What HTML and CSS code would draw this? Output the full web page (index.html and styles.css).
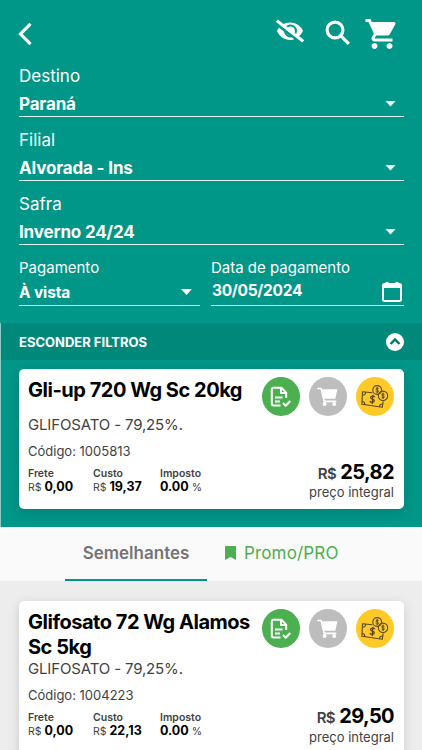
FILE: index.html
```html
<!DOCTYPE html>
<html lang="pt-BR">
<head>
<meta charset="utf-8">
<title>Produtos</title>
<link rel="stylesheet" href="styles.css">
</head>
<body>
<svg class="defs" width="0" height="0">
  <symbol id="cart" viewBox="0 0 24 24"><path d="M7 18c-1.100 0-1.990.9-1.990 2S5.900 22 7 22s2-.9 2-2-.9-2-2-2zM1 2v2h2l3.600 7.590-1.350 2.450C4.520 15.370 5.480 17 7 17h12v-2H7.420c-.14 0-.25-.11-.25-.25l.03-.12.900-1.630h7.450c.75 0 1.410-.41 1.750-1.030l3.580-6.490A1 1 0 0 0 20 4H5.210l-.94-2H1zm16 16c-1.100 0-1.990.9-1.990 2s.89 2 1.990 2 2-.9 2-2-.9-2-2-2z"/></symbol>
  <symbol id="cart-small" viewBox="0 0 22 20"><path d="M1 1.500h3.200l3 12.800h11.500" fill="none" stroke="currentColor" stroke-width="1.700" stroke-linecap="round" stroke-linejoin="round"/><path d="M5 2.200h15.400l-2.100 9.600H7.100z"/><circle cx="7.600" cy="17" r="2"/><circle cx="17.200" cy="17" r="2"/></symbol>
  <symbol id="doc" viewBox="0 0 22 22"><g fill="none" stroke="currentColor" stroke-width="2" stroke-linejoin="round"><path d="M10.500 19.500H3.200a1.400 1.400 0 0 1-1.400-1.400V3.200a1.400 1.400 0 0 1 1.400-1.400h8.200l4.800 4.800V12"/><path d="M11 2v5h5M5 11.500h7.500M5 15.500h5"/><path d="m13 17 2.700 2.700 4.500-4.700" stroke-width="2.200"/></g></symbol>
  <symbol id="money" viewBox="0 0 28 24"><g fill="none" stroke="currentColor" stroke-width="1.100" stroke-linejoin="round"><path d="M11.500 7.700 1.500 6.800.9 19.300l20.400 3 .9-6"/><path d="M1.500 10.200c2 .1 3.200-1.200 3.200-3.100M1 16.200c2 .3 2.900 1.900 2.800 3.500M18.500 21.800c.1-1.800 1.400-2.900 3.200-2.800"/><circle cx="16.200" cy="5" r="4.400"/><circle cx="22" cy="10.800" r="4.700"/><path d="M13.800 12.100c-.7-1.400-4-1.500-4.200.4-.2 2 3.900 1.300 3.700 3.500-.2 1.900-3.600 1.800-4.400.1M11.900 9.700l-.7 9.400" stroke-width="1.300"/><path d="M17.700 3.800c-.5-1-2.700-1-2.800.2-.1 1.300 2.700.8 2.600 2.200-.1 1.200-2.300 1.100-2.800.1M16.200 1.900v6.200M23.500 9.600c-.5-1-2.700-1-2.800.2-.1 1.300 2.700.8 2.600 2.200-.1 1.200-2.300 1.100-2.800.1M22 7.700v6.200" stroke-width="1"/></g></symbol>
</svg>
<main class="screen">
  <section class="top">
    <header class="toolbar">
      <svg class="back" viewBox="0 0 14 24"><path d="M12.500 1.800 2.500 12l10 10.200"/></svg>
      <svg class="eye" viewBox="0 0 28 24"><path class="eye-shape" d="M1 12C3.500 6.500 8.200 3.500 14 3.500s10.500 3 13 8.500q-1.600 3.400-4.200 5.500L17 20.700Q15.500 21 14 21C8.200 21 3.500 17.500 1 12z"/><circle class="eye-ring" cx="14.500" cy="12" r="5.500"/><path class="eye-gap" d="M0 4.800 25.500 24"/><path class="eye-slash" d="m.8 1.800 26.400 20.400"/></svg>
      <svg class="search" viewBox="0 0 26 26"><circle cx="10" cy="10" r="7.900"/><path d="m15.800 15.800 8 8"/></svg>
      <svg class="cart"><use href="#cart"/></svg>
    </header>
    <div class="filters">
      <div class="field"><span class="label">Destino</span><div class="value"><b>Paraná</b><i class="arrow"></i></div></div>
      <div class="field"><span class="label">Filial</span><div class="value"><b>Alvorada - Ins</b><i class="arrow"></i></div></div>
      <div class="field"><span class="label">Safra</span><div class="value"><b>Inverno 24/24</b><i class="arrow"></i></div></div>
      <div class="pair">
        <div class="field short"><span class="label">Pagamento</span><div class="value"><b>À vista</b><i class="arrow"></i></div></div>
        <div class="field short date"><span class="label">Data de pagamento</span><div class="value"><b>30/05/2024</b><svg class="calendar" viewBox="0 0 20 22"><path d="M2.500 3h15q1.500 0 1.500 1.500v14q0 1.500-1.500 1.500h-15Q1 20 1 18.500v-14Q1 3 2.500 3z"/><path class="thick" d="M1 5.500h18M5 1v4M15 1v4"/></svg></div></div>
      </div>
    </div>
    <div class="toggle"><b>ESCONDER FILTROS</b><svg viewBox="0 0 18 18"><circle cx="9" cy="9" r="9"/><path d="m4.500 11 4.500-4.500 4.500 4.500"/></svg></div>
    <div class="main-product">
      <article class="card">
        <div class="heading"><h2>Gli-up 720 Wg Sc 20kg</h2><div class="actions"><span class="round green"><svg><use href="#doc"/></svg></span><span class="round gray"><svg><use href="#cart-small"/></svg></span><span class="round yellow"><svg><use href="#money"/></svg></span></div></div>
        <p class="ingredient">GLIFOSATO - 79,25%.</p>
        <p class="code">Código: 1005813</p>
        <div class="bottom"><dl class="costs"><div><dt>Frete</dt><dd>R$ <b>0,00</b></dd></div><div><dt>Custo</dt><dd>R$ <b>19,37</b></dd></div><div><dt>Imposto</dt><dd><b>0.00</b> %</dd></div></dl><div class="price"><div class="amount"><small>R$</small> 25,82</div><span>preço integral</span></div></div>
      </article>
    </div>
  </section>
  <nav class="tabs"><div class="tab active">Semelhantes</div><div class="tab promo"><svg viewBox="0 0 11 14"><path d="M0 1q0-1 1-1h9q1 0 1 1v13l-5.500-3L0 14z"/></svg><span>Promo/PRO</span></div></nav>
  <section class="similar">
    <article class="card second">
      <div class="heading"><h2>Glifosato 72 Wg Alamos<br>Sc 5kg</h2><div class="actions"><span class="round green"><svg><use href="#doc"/></svg></span><span class="round gray"><svg><use href="#cart-small"/></svg></span><span class="round yellow"><svg><use href="#money"/></svg></span></div></div>
      <p class="ingredient">GLIFOSATO - 79,25%.</p>
      <p class="code">Código: 1004223</p>
      <div class="bottom"><dl class="costs"><div><dt>Frete</dt><dd>R$ <b>0,00</b></dd></div><div><dt>Custo</dt><dd>R$ <b>22,13</b></dd></div><div><dt>Imposto</dt><dd><b>0.00</b> %</dd></div></dl><div class="price"><div class="amount"><small>R$</small> 29,50</div><span>preço integral</span></div></div>
    </article>
  </section>
</main>
</body>
</html>
```
FILE: styles.css
```css
* { box-sizing: border-box; }
body { margin: 0; font-family: Inter, "Liberation Sans", sans-serif; color: #000; background: #ededed; overflow: hidden; }
svg { display: block; fill: currentColor; flex: none; }
.defs { position: absolute; }
.screen { height: 750px; overflow: hidden; }
.top { height: 527px; background: #009688; color: #fff; }
.toolbar { height: 65px; display: flex; padding: 0 22px 0 18px; align-items: flex-start; }
.back { width: 14px; height: 24px; margin-top: 22px; fill: none; stroke: #fff; stroke-width: 3.200; }
.eye { width: 28px; height: 24px; margin: 19px 0 0 auto; }
.eye-ring { fill: none; stroke: #009688; stroke-width: 2; }
.eye-gap { stroke: #009688; stroke-width: 2.6; }
.eye-slash { stroke: #fff; stroke-width: 3; }
.search { width: 26px; height: 26px; margin: 20px 0 0 21px; fill: none; stroke: #fff; stroke-width: 3.200; }
.cart { width: 36px; height: 36px; margin: 16px 0 0 13px; }
.filters { padding: 0 18px 0 19px; height: 258px; }
.field { height: 52px; margin-bottom: 12px; border-bottom: 1px solid #e2f4f1; }
.label { display: block; height: 22px; line-height: 23px; font-size: 17px; }
.value { height: 29px; display: flex; align-items: center; justify-content: space-between; font-size: 17px; letter-spacing: -.15px; padding: 4px 8px 0 0; }
.value b { font-weight: 700; }
.arrow { width: 11px; height: 6px; background: #fff; clip-path: polygon(0 0, 100% 0, 50% 100%); }
.pair { display: grid; grid-template-columns: 181px 193px; gap: 11px; }
.short { height: 49px; }
.short .label { font-size: 15px; height: 21px; line-height: 21px; }
.short .value { font-size: 15.500px; height: 27px; padding-top: 1px; }
.date .value { padding: 0 2px 0 1px; letter-spacing: -.3px; }
.date b { margin-top: -2px; }
.calendar { width: 20px; height: 22px; fill: none; stroke: #fff; stroke-width: 2; }
.calendar .thick { stroke-width: 2.800; }
.toggle { height: 37px; background: #00897b; padding: 0 18px 0 18px; border-left: 1px solid #8bcdc5; display: flex; align-items: center; justify-content: space-between; font-size: 13px; }
.toggle svg { width: 18px; height: 18px; }
.toggle path { fill: none; stroke: #00796b; stroke-width: 2.400; }
.main-product { height: 167px; padding: 9px 18px 0 18px; border-left: 1px solid #8bcdc5; }
.card { height: 140px; background: #fff; border-radius: 5px; box-shadow: 0 3px 12px #00000024; color: #000; padding: 8px 9px 0; }
.heading { display: flex; justify-content: space-between; height: 38px; }
h2 { margin: 1px 0 0; font-size: 20px; line-height: 25px; font-weight: 650; letter-spacing: -.48px; white-space: nowrap; }
.actions { display: flex; gap: 9px; margin-right: 1px; }
.round { width: 38px; height: 39px; border-radius: 50%; display: flex; align-items: center; justify-content: center; color: #fff; }
.green { background: #4caf50; }
.gray { background: #bdbdbd; }
.yellow { background: #ffca28; color: #5b4825; }
.green svg { width: 22px; height: 22px; }
.gray svg { width: 22px; height: 20px; }
.yellow svg { width: 28px; height: 24px; }
p { margin: 0; color: #424242; white-space: nowrap; }
.ingredient { font-size: 15px; line-height: 20px; letter-spacing: -.15px; }
.code { font-size: 13px; line-height: 18px; margin-top: 7px; }
.bottom { display: flex; justify-content: space-between; }
.costs { display: flex; margin: 7px 0 0; white-space: nowrap; }
.costs div:nth-child(-n+2) { width: 65px; }
.costs div:nth-child(2) { width: 67px; }
dt { font-size: 10.500px; font-weight: 600; line-height: 13px; color: #424242; }
dd { margin: 0; font-size: 10.500px; line-height: 13px; color: #424242; }
dd b { font-size: 12.500px; color: #000; }
.price { text-align: right; font-size: 13px; color: #424242; white-space: nowrap; padding-right: 1px; }
.amount { color: #000; font-weight: 700; font-size: 20px; line-height: 24px; letter-spacing: -.6px; }
.amount small { font-size: 15px; font-weight: 600; color: #424242; }
.price span { display: block; line-height: 16px; margin-top: -2px; }
.tabs { height: 54px; background: #fafafa; display: flex; padding-left: 65px; }
.tab { width: 142px; display: flex; align-items: center; justify-content: center; font-size: 17px; }
.active { color: #757575; font-weight: 600; border-bottom: 2px solid #009688; }
.promo { width: auto; margin-left: 18px; color: #4caf50; gap: 8px; padding-bottom: 2px; letter-spacing: .15px; }
.promo svg { width: 11px; height: 14px; }
.similar { height: 169px; padding: 20px 18px 0 19px; background: #ededed; }
.second { height: 170px; }
.second .heading { height: 50px; }
.second .price span { margin-top: -1px; }
```
